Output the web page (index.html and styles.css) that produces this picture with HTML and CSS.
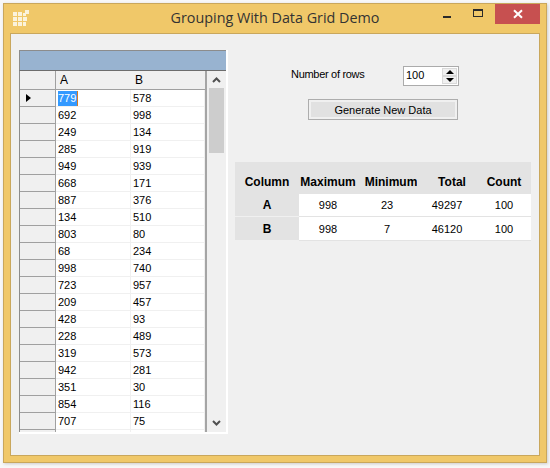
FILE: index.html
```html
<!DOCTYPE html>
<html lang="en">
<head>
<meta charset="utf-8">
<title>Grouping With Data Grid Demo</title>
<link rel="stylesheet" href="styles.css">
</head>
<body>
<div class="window">
  <header class="titlebar">
    <svg class="app-icon" width="16" height="16" viewBox="0 0 16 16">
      <g fill="#fbf3dc">
        <rect x="0" y="2" width="4" height="4"/><rect x="5" y="2" width="4" height="4"/><rect x="10" y="3" width="3" height="3"/>
        <rect x="0" y="7" width="4" height="4"/><rect x="5" y="7" width="4" height="4"/><rect x="10" y="7" width="4" height="4"/>
        <rect x="0" y="12" width="4" height="4"/><rect x="5" y="12" width="4" height="4"/><rect x="10" y="12" width="3" height="4"/>
        <rect x="12" y="0" width="4" height="4"/>
      </g>
    </svg>
    <div class="title">Grouping With Data Grid Demo</div>
    <div class="controls">
      <div class="ctl"><span class="min"></span></div>
      <div class="ctl"><span class="max"></span></div>
      <div class="ctl close">
        <svg width="10" height="10" viewBox="0 0 10 10"><path d="M1 1.2L9 8.8M9 1.2L1 8.8" stroke="#fff" stroke-width="2" fill="none"/></svg>
      </div>
    </div>
  </header>
  <main class="client">
    <section class="grid">
      <div class="groupbar"></div>
      <div class="grid-body">
        <div class="table">
          <div class="row head"><div class="rh"></div><div class="cell"><span class="hsep">A</span></div><div class="cell">B</div></div>
          <div class="row"><div class="rh"><span class="arrow"></span></div><div class="cell"><span class="sel">779</span></div><div class="cell">578</div></div>
          <div class="row"><div class="rh"></div><div class="cell">692</div><div class="cell">998</div></div>
          <div class="row"><div class="rh"></div><div class="cell">249</div><div class="cell">134</div></div>
          <div class="row"><div class="rh"></div><div class="cell">285</div><div class="cell">919</div></div>
          <div class="row"><div class="rh"></div><div class="cell">949</div><div class="cell">939</div></div>
          <div class="row"><div class="rh"></div><div class="cell">668</div><div class="cell">171</div></div>
          <div class="row"><div class="rh"></div><div class="cell">887</div><div class="cell">376</div></div>
          <div class="row"><div class="rh"></div><div class="cell">134</div><div class="cell">510</div></div>
          <div class="row"><div class="rh"></div><div class="cell">803</div><div class="cell">80</div></div>
          <div class="row"><div class="rh"></div><div class="cell">68</div><div class="cell">234</div></div>
          <div class="row"><div class="rh"></div><div class="cell">998</div><div class="cell">740</div></div>
          <div class="row"><div class="rh"></div><div class="cell">723</div><div class="cell">957</div></div>
          <div class="row"><div class="rh"></div><div class="cell">209</div><div class="cell">457</div></div>
          <div class="row"><div class="rh"></div><div class="cell">428</div><div class="cell">93</div></div>
          <div class="row"><div class="rh"></div><div class="cell">228</div><div class="cell">489</div></div>
          <div class="row"><div class="rh"></div><div class="cell">319</div><div class="cell">573</div></div>
          <div class="row"><div class="rh"></div><div class="cell">942</div><div class="cell">281</div></div>
          <div class="row"><div class="rh"></div><div class="cell">351</div><div class="cell">30</div></div>
          <div class="row"><div class="rh"></div><div class="cell">854</div><div class="cell">116</div></div>
          <div class="row"><div class="rh"></div><div class="cell">707</div><div class="cell">75</div></div>
          <div class="row"><div class="rh"></div><div class="cell"></div><div class="cell"></div></div>
        </div>
        <div class="scrollbar">
          <svg class="sb-arrow" width="9" height="6" viewBox="0 0 9 6"><path d="M1 5L4.5 1.5L8 5" stroke="#505050" stroke-width="2" fill="none"/></svg>
          <div class="thumb"></div>
          <svg class="sb-arrow sb-down" width="9" height="6" viewBox="0 0 9 6"><path d="M1 1L4.5 4.5L8 1" stroke="#505050" stroke-width="2" fill="none"/></svg>
        </div>
      </div>
    </section>
    <section class="side">
      <div class="rows-line">
        <span class="rows-label">Number of rows</span>
        <div class="spinner">
          <span class="spin-val">100</span>
          <div class="spin-btns">
            <div class="spin-btn"><span class="up"></span></div>
            <div class="spin-btn"><span class="down"></span></div>
          </div>
        </div>
      </div>
      <button class="gen" type="button">Generate New Data</button>
      <div class="summary">
        <div class="s-head">Column</div><div class="s-head">Maximum</div><div class="s-head s-min">Minimum</div><div class="s-head s-total">Total</div><div class="s-head">Count</div>
        <div class="s-key">A</div><div class="s-val">998</div><div class="s-val">23</div><div class="s-val">49297</div><div class="s-val">100</div>
        <div class="s-key">B</div><div class="s-val">998</div><div class="s-val">7</div><div class="s-val">46120</div><div class="s-val">100</div>
      </div>
    </section>
  </main>
</div>
</body>
</html>
```
FILE: styles.css
```css
* { box-sizing: border-box; }
html, body { margin: 0; padding: 0; }
body {
  width: 550px;
  height: 468px;
  background: #f8f8f8;
  font-family: "Liberation Sans", Arial, sans-serif;
  font-size: 11px;
  color: #000;
  padding: 3px 0 0 3px;
  overflow: hidden;
}
.window {
  width: 544px;
  height: 460px;
  background: #f0c869;
  border: 1px solid #c9a75c;
  box-shadow: 1px 1px 3px rgba(0, 0, 0, .18);
  padding: 0 6px 6px 6px;
  display: flex;
  flex-direction: column;
}
.titlebar {
  height: 29px;
  flex: none;
  display: flex;
  align-items: flex-start;
  position: relative;
}
.app-icon { margin: 6px 0 0 3px; }
.title {
  position: absolute;
  left: 0;
  right: 0;
  top: 4px;
  text-align: center;
  font-family: "Open Sans", sans-serif;
  font-size: 14.35px;
  line-height: 20px;
  color: #333;
}
.controls {
  margin-left: auto;
  display: flex;
  position: relative;
}
.ctl {
  width: 31px;
  height: 20px;
  display: flex;
  align-items: center;
  justify-content: center;
}
.close {
  width: 45px;
  background: #c75050;
  margin-left: 2px;
}
.min { width: 8px; height: 2px; margin-top: 5px; background: #2a2a2a; }
.max { width: 10px; height: 8px; border: 1px solid #2a2a2a; border-top-width: 2px; margin-top: -3px; }
.client {
  flex: 1;
  background: #f0f0f0;
  border: 1px solid #c9a75c;
  padding: 16px 0 0 8px;
  display: flex;
  align-items: flex-start;
}
.grid {
  width: 209px;
  height: 384px;
  flex: none;
  border-bottom: 2px solid #fff;
  border-right: 2px solid #fff;
  display: flex;
  flex-direction: column;
}
.groupbar {
  height: 21px;
  flex: none;
  background: #98b3d0;
  border: 1px solid #8c8c8c;
  border-bottom: 1px solid #6d6d6d;
  border-right: 0;
}
.grid-body {
  flex: 1;
  min-height: 0;
  display: flex;
  border-left: 1px solid #8c8c8c;
}
.table {
  width: 187px;
  flex: none;
  overflow: hidden;
  border-right: 2px solid #a5a5a5;
}
.row {
  display: grid;
  grid-template-columns: 36px 75px 74px;
  grid-template-rows: 17px;
  height: 17px;
  line-height: 15px;
}
.rh {
  background: #f0f0f0;
  border-bottom: 1px solid #a0a0a0;
  border-right: 1px solid #a0a0a0;
  position: relative;
}
.cell {
  background: #fff;
  border-bottom: 1px solid #f0f0f0;
  border-right: 1px solid #f0f0f0;
  padding: 1px 0 0 2px;
}
.head { height: 19px; grid-template-rows: 19px; line-height: 16px; }
.head .cell {
  background: #f0f0f0;
  border-bottom: 1px solid #a0a0a0;
  border-right: 0;
  padding: 1px 0 0 4px;
  font-size: 12px;
}
.hsep { display: block; height: 15px; border-right: 1px solid #a0a0a0; margin-right: -1px; }
.arrow {
  position: absolute;
  left: 6px;
  top: 4px;
  width: 0;
  height: 0;
  border-left: 5px solid #000;
  border-top: 4px solid transparent;
  border-bottom: 4px solid transparent;
}
.sel { display: inline-block; background: #3399ff; color: #fff; height: 15px; vertical-align: top; padding-right: 1px; border-right: 1px solid #d97a20; }
.scrollbar {
  flex: 1;
  background: #f0f0f0;
  display: flex;
  flex-direction: column;
  align-items: flex-start;
  position: relative;
}
.sb-arrow { margin: 6px 0 0 5px; flex: none; }
.thumb { width: 15px; height: 65px; background: #cdcdcd; margin: 5px 0 0 2px; }
.sb-down { position: absolute; bottom: 6px; left: 0; margin: 0 0 0 5px; }
.side {
  margin-left: 7px;
  flex: 1;
  display: flex;
  flex-direction: column;
  padding-top: 16px;
}
.rows-line { display: flex; align-items: flex-start; height: 20px; }
.rows-label { margin-left: 56px; width: 112px; line-height: 16px; letter-spacing: -0.3px; }
.spinner {
  width: 56px;
  height: 20px;
  background: #fff;
  border: 1px solid #ababab;
  display: flex;
  justify-content: space-between;
}
.spin-val { padding-left: 2px; line-height: 16px; }
.spin-btns { width: 15px; display: flex; flex-direction: column; margin: 1px 1px 1px 0; }
.spin-btn {
  flex: 1;
  background: #f0f0f0;
  border: 1px solid #d9d9d9;
  display: flex;
  align-items: center;
  justify-content: center;
}
.up { width: 0; height: 0; border: 4px solid transparent; border-top: 0; border-bottom: 4px solid #000; }
.down { width: 0; height: 0; border: 4px solid transparent; border-bottom: 0; border-top: 4px solid #000; }
.gen {
  width: 150px;
  height: 21px;
  margin: 13px 0 0 73px;
  background: #e1e1e1;
  border: 1px solid #adadad;
  box-shadow: inset 0 0 0 2px #f0f0f0;
  font: 11px "Liberation Sans", Arial, sans-serif;
  color: #000;
  padding: 0;
}
.summary {
  margin-top: 42px;
  width: 296px;
  display: grid;
  grid-template-columns: 64px 58px 60px 60px 54px;
  grid-template-rows: 32px 23px 24px;
  background: #fff;
  text-align: center;
  font-size: 12px;
}
.s-head, .s-key {
  background: #e3e3e3;
  font-weight: bold;
  display: flex;
  align-items: center;
  justify-content: center;
}
.s-head { padding-top: 8px; }
.s-min { padding-left: 8px; }
.s-total { padding-left: 10px; }
.s-val {
  display: flex;
  align-items: center;
  justify-content: center;
  border-bottom: 1px solid #e3e3e3;
  font-size: 11px;
}
.s-key { border-bottom: 1px solid #f0f0f0; }
```
